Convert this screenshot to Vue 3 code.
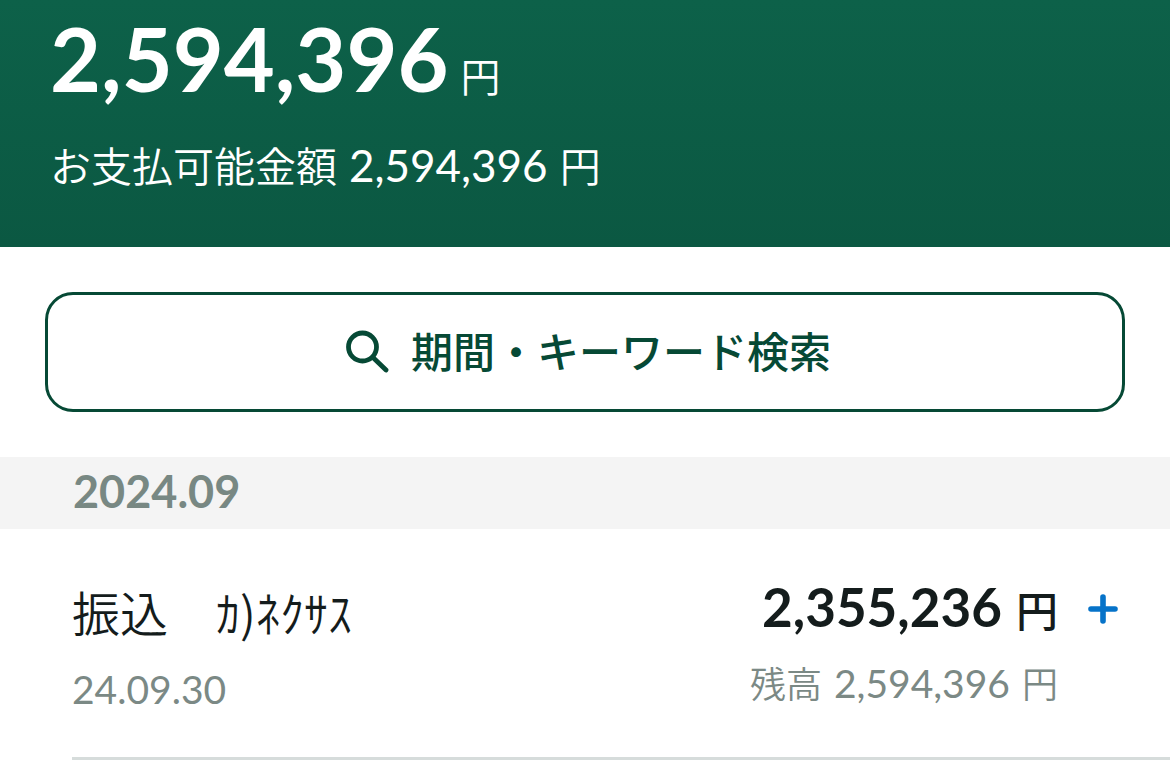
<script setup>
const balance = { total: '2,594,396', payable: '2,594,396' }
const months = [
  {
    label: '2024.09',
    entries: [
      { title: '振込　ｶ)ﾈｸｻｽ', date: '24.09.30', amount: '2,355,236', balance: '2,594,396' },
    ],
  },
]
</script>

<template>
  <main class="account">
    <header class="summary">
      <p class="total"><span class="total-value">{{ balance.total }}</span><span class="yen">円</span></p>
      <p class="payable">お支払可能金額<span class="payable-value">{{ balance.payable }}</span>円</p>
    </header>

    <div class="search-area">
      <button class="search" type="button">
        <svg class="search-icon" viewBox="0 0 44 44" fill="none" aria-hidden="true">
          <circle cx="17.5" cy="17" r="14" stroke="currentColor" stroke-width="4.8" />
          <path d="M28 27.5 41 40" stroke="currentColor" stroke-width="4.8" stroke-linecap="round" />
        </svg>
        <span>期間・キーワード検索</span>
      </button>
    </div>

    <section v-for="month in months" :key="month.label">
      <h2 class="month">{{ month.label }}</h2>
      <ul class="entries">
        <li v-for="entry in month.entries" :key="entry.date" class="entry">
          <div class="detail">
            <p class="title">{{ entry.title }}</p>
            <p class="date">{{ entry.date }}</p>
          </div>
          <div class="figures">
            <p class="amount">{{ entry.amount }}<span class="amount-yen">円</span></p>
            <p class="after">残高<span class="after-value">{{ entry.balance }}</span>円</p>
          </div>
          <svg class="plus" viewBox="0 0 30 30" fill="none" role="img" aria-label="入金">
            <path d="M15 3v24M3 15h24" stroke="currentColor" stroke-width="5.6" stroke-linecap="round" />
          </svg>
        </li>
      </ul>
    </section>
  </main>
</template>

<style>
body {
  margin: 0;
  background: #fff;
}
</style>

<style scoped>
.account {
  font-family: Lato, "Noto Sans CJK JP", sans-serif;
  color: #141c1c;
}

p,
h2,
ul {
  margin: 0;
  padding: 0;
}

.summary {
  padding: 8px 50px 50px;
  color: #fff;
  background: linear-gradient(#0d6149, #0b5842);
}

.total {
  display: flex;
  align-items: baseline;
  gap: 12px;
  line-height: 100px;
}

.total-value {
  font-size: 88px;
  font-weight: 700;
}

.yen {
  font-size: 40px;
  font-weight: 350;
}

.payable {
  display: flex;
  align-items: baseline;
  gap: 12px;
  margin-top: 8px;
  font-size: 41px;
  font-weight: 350;
  line-height: 60px;
}

.payable-value {
  font-size: 44px;
  font-weight: 400;
}

.search-area {
  padding: 45px;
}

.search {
  display: flex;
  align-items: center;
  justify-content: center;
  gap: 22px;
  width: 100%;
  padding: 27px 0 27px 6px;
  border: 3px solid #064935;
  border-radius: 28px;
  background: #fff;
  color: #064935;
  font-family: inherit;
  font-size: 42px;
  font-weight: 500;
  line-height: 60px;
}

.search-icon {
  width: 44px;
  height: 44px;
}

.month {
  padding: 0 73px 4px;
  background: #f4f4f4;
  color: #788883;
  font-size: 45px;
  font-weight: 700;
  line-height: 68px;
}

.entries {
  list-style: none;
}

.entry {
  display: flex;
  align-items: flex-start;
  margin-left: 72px;
  padding: 40px 52px 36px 0;
  border-bottom: 3px solid #d6dcdb;
}

.detail {
  flex: 1;
  padding-top: 3px;
}

.title {
  font-family: "Noto Sans CJK JP", sans-serif;
  font-size: 48px;
  font-weight: 350;
  line-height: 78px;
}

.date,
.after {
  color: #7b8985;
  line-height: 64px;
}

.date {
  margin-top: 7px;
  font-size: 39px;
  font-weight: 400;
}

.amount {
  display: flex;
  align-items: baseline;
  justify-content: flex-end;
  gap: 14px;
  font-size: 53px;
  font-weight: 700;
  line-height: 76px;
}

.amount-yen {
  font-size: 42px;
  font-weight: 500;
}

.after {
  display: flex;
  align-items: baseline;
  justify-content: flex-end;
  gap: 12px;
  margin-top: 2px;
  font-size: 36px;
  font-weight: 350;
}

.after-value {
  font-size: 39px;
  font-weight: 400;
}

.plus {
  width: 30px;
  height: 30px;
  margin: 25px 0 0 30px;
  color: #0673c9;
}
</style>
